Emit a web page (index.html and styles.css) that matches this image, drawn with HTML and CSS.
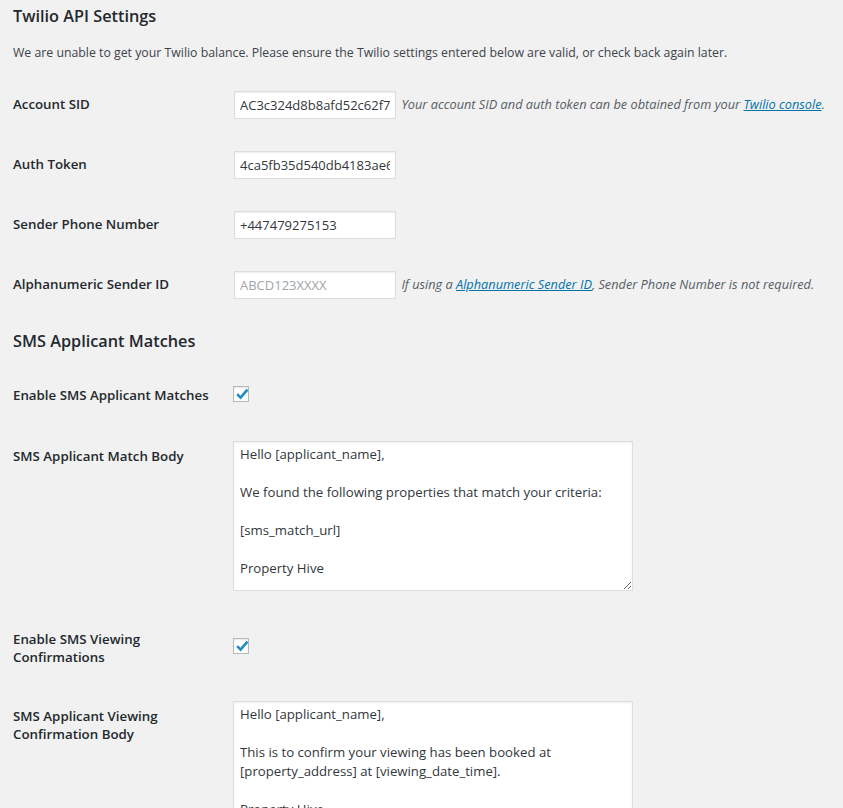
FILE: index.html
```html
<!DOCTYPE html>
<html lang="en">
<head>
<meta charset="utf-8">
<title>Twilio API Settings</title>
<link rel="stylesheet" href="styles.css">
</head>
<body>
<div class="wrap">
  <h2 class="section-title">Twilio API Settings</h2>
  <p class="notice-text">We are unable to get your Twilio balance. Please ensure the Twilio settings entered below are valid, or check back again later.</p>
  <table class="form-table">
    <tr>
      <th>Account SID</th>
      <td><input class="regular-input" type="text" value="AC3c324d8b8afd52c62f7a91e0b4d2c7f3"> <span class="description">Your account SID and auth token can be obtained from your <a href="#">Twilio console</a>.</span></td>
    </tr>
    <tr>
      <th>Auth Token</th>
      <td><input class="regular-input" type="text" value="4ca5fb35d540db4183ae6c02f91b7d58"></td>
    </tr>
    <tr>
      <th>Sender Phone Number</th>
      <td><input class="regular-input" type="text" value="+447479275153"></td>
    </tr>
    <tr>
      <th>Alphanumeric Sender ID</th>
      <td><input class="regular-input" type="text" placeholder="ABCD123XXXX"> <span class="description">If using a <a href="#">Alphanumeric Sender ID</a>, Sender Phone Number is not required.</span></td>
    </tr>
  </table>

  <h2 class="section-title second">SMS Applicant Matches</h2>
  <table class="form-table second-table">
    <tr class="check-row">
      <th>Enable SMS Applicant Matches</th>
      <td><span class="checkbox"><svg viewBox="0 0 16 16" width="16" height="16"><path d="M3.2 8.2 L6.6 11.6 L13.4 3.6" fill="none" stroke="#1e8cbe" stroke-width="2.6"/></svg></span></td>
    </tr>
    <tr class="area-row">
      <th>SMS Applicant Match Body</th>
      <td><textarea class="body-area" rows="7">Hello [applicant_name],

We found the following properties that match your criteria:

[sms_match_url]

Property Hive</textarea></td>
    </tr>
    <tr class="check-row">
      <th>Enable SMS Viewing Confirmations</th>
      <td><span class="checkbox"><svg viewBox="0 0 16 16" width="16" height="16"><path d="M3.2 8.2 L6.6 11.6 L13.4 3.6" fill="none" stroke="#1e8cbe" stroke-width="2.6"/></svg></span></td>
    </tr>
    <tr class="area-row">
      <th>SMS Applicant Viewing Confirmation Body</th>
      <td><textarea class="body-area" rows="7">Hello [applicant_name],

This is to confirm your viewing has been booked at [property_address] at [viewing_date_time].

Property Hive</textarea></td>
    </tr>
  </table>
</div>
</body>
</html>
```

FILE: styles.css
```css
html, body {
  margin: 0;
  padding: 0;
  background: #f1f1f1;
}
body {
  font-family: "Open Sans", "Noto Sans", sans-serif;
  font-size: 13px;
  line-height: 1.4;
  color: #23282d;
}
.wrap {
  padding: 0 13px;
}
.section-title {
  font-size: 16.3px;
  font-weight: 600;
  line-height: 1.3;
  margin: 0;
  padding-top: 6px;
  color: #23282d;
}
.section-title.second {
  padding-top: 16px;
}
.notice-text {
  margin: 17px 0 0;
  font-size: 12.3px;
  color: #3c434a;
}
.form-table {
  border-collapse: collapse;
  table-layout: fixed;
  margin-top: 14px;
  width: 100%;
}
.form-table.second-table {
  margin-top: 13px;
}
.form-table th {
  width: 200px;
  padding: 20px 10px 20px 0;
  text-align: left;
  vertical-align: top;
  font-size: 13.3px;
  font-weight: 600;
  line-height: 18px;
}
.form-table td {
  padding: 15px 10px;
  vertical-align: middle;
  white-space: nowrap;
}
.regular-input {
  box-sizing: border-box;
  width: 162px;
  height: 28px;
  margin: 1px 1px;
  padding: 3px 5px;
  border: 1px solid #ddd;
  box-shadow: inset 0 1px 2px rgba(0,0,0,.07);
  background: #fff;
  font-family: inherit;
  font-size: 13px;
  color: #32373c;
  vertical-align: middle;
  outline: none;
}
.regular-input::placeholder {
  color: #a0a5aa;
}
.description {
  font-style: italic;
  font-size: 12.75px;
  color: #555d66;
  margin-left: 1px;
}
.description a {
  color: #0073aa;
}
.checkbox {
  display: block;
  box-sizing: border-box;
  width: 16px;
  height: 16px;
  border: 1px solid #b4b9be;
  background: #fff;
  box-shadow: inset 0 1px 2px rgba(0,0,0,.1);
  position: relative;
}
.checkbox svg {
  position: absolute;
  left: 0;
  top: -1px;
}
.check-row td {
  padding-top: 20px;
  padding-bottom: 24px;
}
.body-area {
  box-sizing: border-box;
  display: block;
  width: 400px;
  height: 150px;
  margin: 0;
  padding: 3px 6px 2px;
  border: 1px solid #ddd;
  box-shadow: inset 0 1px 2px rgba(0,0,0,.07);
  background: #fff;
  font-family: inherit;
  font-size: 13.2px;
  line-height: 19px;
  color: #32373c;
  resize: both;
  outline: none;
  white-space: pre-wrap;
}
.area-row th {
  padding-top: 21px;
}
.area-row td {
  vertical-align: top;
  padding-bottom: 19px;
}
```
